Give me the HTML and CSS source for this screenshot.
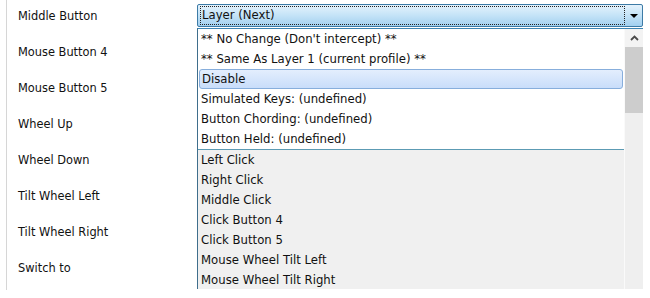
FILE: index.html
```html
<!DOCTYPE html>
<html lang="en">
<head>
    <meta charset="UTF-8">
    <title>Button Settings</title>
    <link rel="stylesheet" href="styles.css">
</head>
<body>

    <div class="window">
        <!-- Button names -->
        <div class="labels">
            <div class="label">Middle Button</div>
            <div class="label">Mouse Button 4</div>
            <div class="label">Mouse Button 5</div>
            <div class="label">Wheel Up</div>
            <div class="label">Wheel Down</div>
            <div class="label">Tilt Wheel Left</div>
            <div class="label">Tilt Wheel Right</div>
            <div class="label">Switch to</div>
        </div>

        <!-- Action picker -->
        <div class="field">
            <div class="combo">
                <span class="combo-text">Layer (Next)</span>
                <span class="combo-arrow"></span>
            </div>

            <div class="dropdown">
                <div class="lists">
                    <ul class="options special">
                        <li>** No Change (Don't intercept) **</li>
                        <li>** Same As Layer 1 (current profile) **</li>
                        <li class="selected">Disable</li>
                        <li>Simulated Keys: (undefined)</li>
                        <li>Button Chording: (undefined)</li>
                        <li>Button Held: (undefined)</li>
                    </ul>
                    <ul class="options actions">
                        <li>Left Click</li>
                        <li>Right Click</li>
                        <li>Middle Click</li>
                        <li>Click Button 4</li>
                        <li>Click Button 5</li>
                        <li>Mouse Wheel Tilt Left</li>
                        <li>Mouse Wheel Tilt Right</li>
                    </ul>
                </div>
                <div class="scrollbar">
                    <div class="scroll-up">
                        <svg width="9" height="6" viewBox="0 0 9 6">
                            <path d="M1 5 L4.5 1.5 L8 5" fill="none" stroke="#4a4a4a" stroke-width="1.8"/>
                        </svg>
                    </div>
                    <div class="thumb"></div>
                </div>
            </div>
        </div>
    </div>

</body>
</html>
```

FILE: styles.css
```css
* {
    margin: 0;
    padding: 0;
    box-sizing: border-box;
}
body {
    background: #fff;
    font-family: "DejaVu Sans", Verdana, sans-serif;
    font-size: 11.7px;
    color: #111;
}
.window {
    display: flex;
    margin-left: 6px;
    height: 290px;
    border-left: 1px solid #d6d6d6;
}
.labels {
    width: 190px;
    padding-left: 11px;
    margin-top: -2px;
    font-size: 11.4px;
}
.label {
    height: 36px;
    line-height: 36px;
}
.field {
    position: relative;
    width: 446px;
    padding-top: 4px;
}
.combo {
    display: flex;
    align-items: center;
    height: 23px;
    border: 1px solid #3d7ba6;
    border-radius: 2px;
    background: linear-gradient(#e4f2fc, #c4e3f7 50%, #a2d0f0);
}
.combo-text {
    flex: 1;
    height: 19px;
    line-height: 17px;
    margin-left: 2px;
    padding-left: 1px;
    border: 1px dotted #222;
}
.combo-arrow {
    width: 17px;
    height: 100%;
    display: flex;
    align-items: center;
    justify-content: center;
}
.combo-arrow::after {
    content: "";
    border-left: 4px solid transparent;
    border-right: 4px solid transparent;
    border-top: 4px solid #000;
}
.dropdown {
    position: absolute;
    top: 28px;
    left: 0;
    right: 0;
    height: 261px;
    display: flex;
    border-top: 1px solid #3d85b4;
    border-left: 1px solid #3f6e8c;
    overflow: hidden;
}
.lists {
    flex: 1;
}
.options {
    list-style: none;
}
.options li {
    height: 20px;
    line-height: 20px;
    padding-left: 3px;
    white-space: nowrap;
}
.special {
    background: #fff;
}
.actions {
    background: #f0f0f0;
    border-top: 1px solid #5c9bb4;
    height: 200px;
}
.options li.selected {
    margin: 0 1px;
    padding-left: 2px;
    line-height: 18px;
    border: 1px solid #87aedc;
    border-radius: 3px;
    background: linear-gradient(#e3eefd, #c8ddfa);
}
.scrollbar {
    width: 19px;
    background: #efefef;
    border-left: 1px solid #fafafa;
}
.scroll-up {
    height: 18px;
    background: #f3f3f3;
    display: flex;
    align-items: center;
    justify-content: center;
}
.thumb {
    height: 66px;
    background: #cdcdcd;
}
```
